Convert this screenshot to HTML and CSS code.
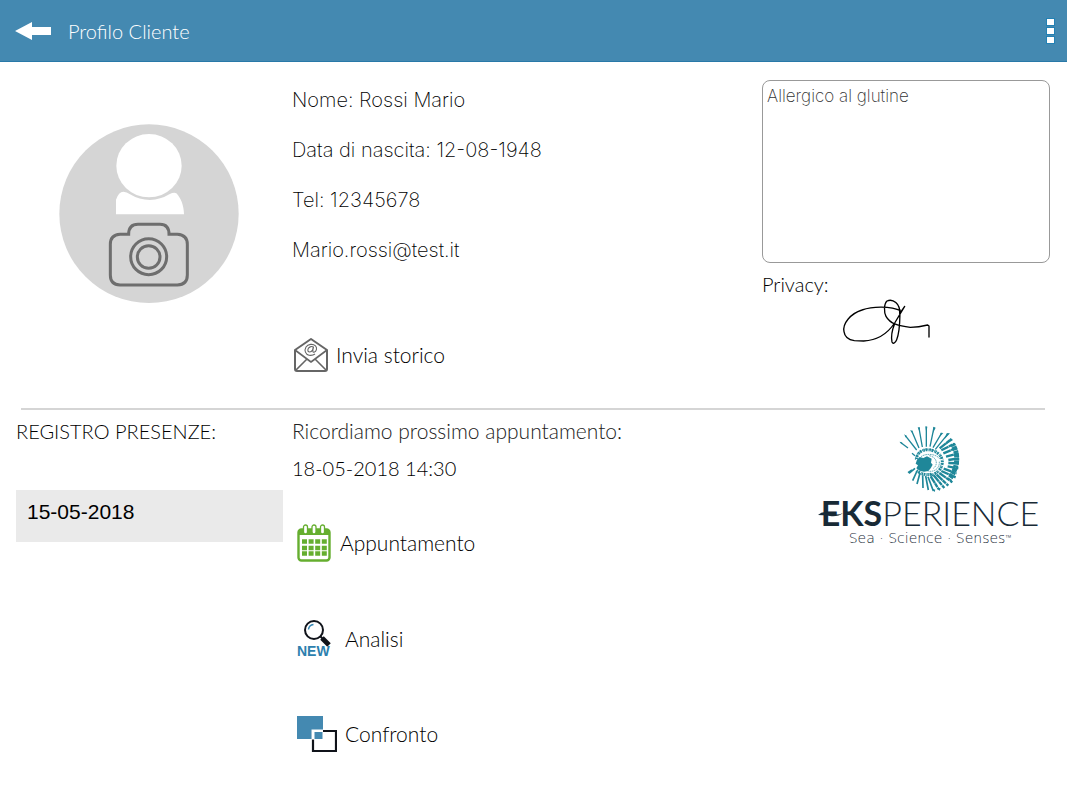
FILE: index.html
```html
<!DOCTYPE html>
<html lang="it">
<head>
<meta charset="utf-8">
<meta name="viewport" content="width=device-width, initial-scale=1">
<title>Profilo Cliente</title>
<link rel="stylesheet" href="styles.css">
</head>
<body>
<header class="bar">
  <button class="icon-button" aria-label="Indietro">
    <svg width="36" height="20" viewBox="0 0 36 20"><path d="M0 10 17 1V6H36V14H17V19Z" fill="#fff"/></svg>
  </button>
  <h1 class="title">Profilo Cliente</h1>
  <button class="icon-button menu" aria-label="Menu">
    <svg width="9" height="26" viewBox="0 0 9 26"><g fill="#fff" stroke="#2381b4"><rect x=".5" y=".5" width="8" height="7"/><rect x=".5" y="9.5" width="8" height="7"/><rect x=".5" y="18.5" width="8" height="7"/></g></svg>
  </button>
</header>
<main>
  <section class="grid profile">
    <button class="avatar" aria-label="Cambia foto">
      <svg width="180" height="180" viewBox="57 41 540 540">
        <ellipse cx="327" cy="310" rx="269" ry="268" fill="#d5d5d5"/>
        <ellipse cx="327" cy="166" rx="98" ry="95" fill="#fff"/>
        <path d="M228 312V268Q236 244 250 244 260 244 270 252 298 269 330 269 362 268 388 252 402 245 409 249C422 262 432 286 432 312Z" fill="#fff"/>
        <g fill="none" stroke="#6e6e6e" stroke-width="9"><path d="M240 372H266Q266 342 294 342H360Q387 342 387 372H412Q442 374 442 402V494Q442 523 412 524H240Q211 523 211 494V402Q211 374 240 372Z"/><circle cx="326" cy="439" r="54"/><circle cx="326" cy="440" r="34"/></g>
      </svg>
    </button>
    <div class="details">
      <p>Nome: Rossi Mario</p>
      <p>Data di nascita: 12-08-1948</p>
      <p>Tel: 12345678</p>
      <p>Mario.rossi@test.it</p>
      <button class="action send">
        <svg width="34" height="34" viewBox="0 0 34 34" fill="none" stroke="#666" stroke-width="2" stroke-linejoin="round"><path d="M1 12 17 1 33 12V31Q33 33 31 33H3Q1 33 1 31Z"/><path d="M1 12 17 24 33 12M2 32 13 21M32 32 21 21" stroke-width="1.6"/><path d="M19.500 9.500C18 7.500 14 9 13.800 12 13.700 14.500 17 15 18.500 12L19.500 9Q18 14.500 20 14.300C22.500 13.500 23.500 10 21.500 7.800 19 5.500 14 6 12 9 10 12.500 11.500 16.500 15 17.200Q18.500 17.800 21 16" stroke-width="1.100"/></svg>
        <span>Invia storico</span>
      </button>
    </div>
    <div class="notes">
      <textarea aria-label="Note">Allergico al glutine</textarea>
      <p class="label">Privacy:</p>
      <svg class="signature" width="90" height="48" viewBox="275 685 270 144" fill="none" stroke="#000" stroke-width="4" stroke-linejoin="round" stroke-linecap="round"><path d="M453 724C420 708 365 710 335 721 300 732 276 762 281 786Q284 809 312 813L340 814C385 812 416 785 433 760L463 710 448 732C451 702 427 686 410 694 400 703 401 729 407 740 420 763 445 769 480 773Q505 773 532 766L536 769V802M433 762C426 779 422 802 425 817 429 826 436 817 439 810 450 783 448 755 449 720"/></svg>
    </div>
  </section>
  <hr>
  <section class="grid visits">
    <div class="register">
      <h2 class="label">REGISTRO PRESENZE:</h2>
      <button class="date">15-05-2018</button>
    </div>
    <div class="next">
      <p class="label reminder">Ricordiamo prossimo appuntamento:</p>
      <p class="label when">18-05-2018 14:30</p>
      <div class="actions">
        <button class="action calendar">
          <svg width="34" height="38" viewBox="0 0 34 38"><rect x="1.500" y="5.500" width="31" height="31" rx="3" fill="#fff" stroke="#65ae2f" stroke-width="2.400"/><path d="M2 11V7Q2 5 4 5H30Q32 5 32 7V11Z" fill="#65ae2f"/><g fill="#fff" stroke="#65ae2f" stroke-width="1.300"><rect x="6.500" y="1" width="4" height="9" rx="2"/><rect x="15" y="1" width="4" height="9" rx="2"/><rect x="23.500" y="1" width="4" height="9" rx="2"/></g><path d="M5 17.500H30M5 24H30M5 29.500H30" stroke="#65ae2f" stroke-width="4.500" stroke-dasharray="5 1.600"/></svg>
          <span>Appuntamento</span>
        </button>
        <button class="action analysis">
          <svg width="36" height="40" viewBox="0 0 36 40"><circle cx="17" cy="11" r="9" fill="#fff" stroke="#10131a" stroke-width="2"/><path d="M11.500 10.500Q12 6 16.500 5.500" fill="none" stroke="#3486b4" stroke-width="1.500"/><path d="M23 17 26 20" stroke="#10131a" stroke-width="2"/><path d="M25 19 32 26" stroke="#10131a" stroke-width="5"/><text x="0" y="37" font-family="Liberation Sans, Arial, sans-serif" font-size="14" font-weight="700" fill="#2d7fae">NEW</text></svg>
          <span>Analisi</span>
        </button>
        <button class="action compare">
          <svg width="40" height="36" viewBox="0 0 40 36"><path d="M0 0H26V23H0Z" fill="#4489b1"/><path d="M16 15H39V35H16Z" fill="#fff" stroke="#10131a" stroke-width="2.200"/><path d="M14.500 23.500V13.500H26V23.500Z" fill="#fff"/><path d="M17.500 16H25.500V23H17.500Z" fill="#4489b1"/></svg>
          <span>Confronto</span>
        </button>
      </div>
    </div>
    <div class="brand">
      <svg width="62" height="68" viewBox="28 13 186 204" fill="none" stroke="#1f8799">
        <g stroke-width="4"><path d="M55 82 32 65M76 105 67 98M81 88 47 45M88 82 66 30M98 79 88 22M110 78V18M121 78 133 20M130 81 156 37M137 86 176 38"/></g>
        <g stroke-width="7" stroke-dasharray="24 1 13 2 30 0"><path d="M150 83 184 56M155 89 194 69M161 98 200 82M169 108 207 98M176 118 208 113M176 127 208 128M174 137 206 143M162 144 201 158M155 151 198 170M149 157 188 185M141 162 176 195M132 164 164 202M123 167 148 207"/></g>
        <g stroke-width="5"><path d="M115 168 131 211M108 166 116 208M99 164 100 202M91 157 82 190M82 151 69 180M76 143 58 158M67 148 55 156"/></g>
        <g fill="#1f8799" stroke="none"><path d="M84 20 91 20 90 34ZM107 17 113 18 110 38ZM131 18 138 21 130 37ZM153 36 161 37 149 50ZM171 38 181 38 164 56ZM183 52 190 58 163 75ZM29 63 38 66 37 71ZM43 41 51 45 49 51ZM61 29 68 30 70 40ZM128 204 137 207 134 215ZM145 202 153 203 150 211Z"/><path d="M82 117 90 109 101 112 112 107 126 114 124 126 129 132 123 143 116 151 103 153 90 150 80 143 85 134 78 129Z"/></g>
        <g stroke-width="9" stroke-dasharray="4 2 6 3 2 1"><path d="M80 115C83 97 94 88 112 87 138 87 159 105 158 124 157 145 142 160 122 164M81 149Q97 165 125 161"/></g>
        <path d="M77 118C80 91 109 78 136 91M94 108C109 97 141 99 151 116M149 123C151 145 129 157 113 150M119 105C144 110 145 134 131 143" stroke-width="2" stroke-dasharray="5 2"/>
        <path d="M189 70Q218 121 178 178" stroke-width="15" stroke-dasharray="7 1 12 2"/>
      </svg>
      <p class="wordmark"><strong>EKS</strong>PERIENCE<svg class="swash" width="25" height="8" viewBox="0 0 25 8"><path d="M0 5Q5 0 12 3T25 3Q20 7 12 6T0 5" fill="#182a36"/></svg></p>
      <p class="tagline">Sea · Science · Senses<span class="tm">™</span></p>
    </div>
  </section>
</main>
</body>
</html>
```
FILE: styles.css
```css
* { box-sizing: border-box; }
body { margin: 0; background: #fff; color: #000; font-family: Lato, "Open Sans", sans-serif; font-size: 20px; font-weight: 300; line-height: 24px; }
p, h1, h2 { margin: 0; font-size: inherit; font-weight: inherit; }
button { margin: 0; padding: 0; border: 0; background: none; color: inherit; font: inherit; text-align: left; cursor: pointer; }
svg { display: block; flex: none; }

.bar { display: flex; align-items: center; height: 62px; padding: 1px 12px 0 15px; background: #4489b1; border-bottom: 1px solid #2879a8; color: #fff; }
.title { flex: 1; margin-left: 17px; }

.grid { display: grid; grid-template-columns: 276px 1fr 288px; padding: 0 17px 0 16px; }
.profile { min-height: 346px; padding-top: 18px; }
.avatar { justify-self: start; align-self: start; margin: 44px 0 0 43px; border-radius: 50%; }
.details { display: flex; flex-direction: column; align-items: flex-start; gap: 26px; padding-top: 8px; font-family: Inter, "Liberation Sans", sans-serif; font-weight: 200; color: #000; }
.action { display: flex; align-items: center; gap: 8px; font-family: Lato, "Open Sans", sans-serif; font-size: 21px; font-weight: 300; color: #000; }
.send { margin: 50px 0 0 2px; }
.notes textarea { display: block; width: 100%; height: 183px; padding: 3px 4px; border: 1px solid #999; border-radius: 8px; background: #fff; color: #333; font: 200 17px/24px Inter, "Liberation Sans", sans-serif; resize: none; }
.notes .label { margin-top: 9px; }
.signature { margin: 2px 0 0 80px; }

hr { height: 2px; margin: 0 22px 0 21px; border: 0; background: #d5d5d5; }

.visits { padding-top: 9px; }
.date { display: block; width: 100%; max-width: 267px; height: 52px; margin-top: 47px; padding: 0 11px 8px; background: #eaeaea; font: 400 21px/24px "Liberation Sans", Arial, sans-serif; }
.reminder { color: #222; font-size: 21px; }
.when { margin-top: 13px; }
.actions { display: flex; flex-direction: column; align-items: flex-start; gap: 57px; margin: 44px 0 0 5px; }
.calendar svg { margin-right: 1px; }
.analysis { gap: 12px; }
.brand { display: flex; flex-direction: column; align-items: center; padding: 6px 0 0 48px; color: #182a36; }
.wordmark { position: relative; font-size: 34px; font-weight: 300; line-height: 40px; white-space: nowrap; }
.wordmark strong { font-weight: 700; }
.swash { position: absolute; left: -3px; top: 17px; }
.tagline { margin-top: -4px; font: 200 14px/18px "DejaVu Sans", sans-serif; white-space: nowrap; }
.tm { font-size: 10px; font-family: Inter, sans-serif; }
```
